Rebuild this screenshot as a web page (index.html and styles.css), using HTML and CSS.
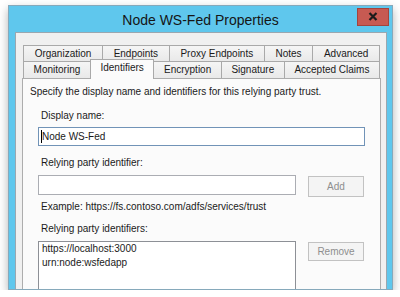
FILE: index.html
```html
<!DOCTYPE html>
<html lang="en">
<head>
<meta charset="UTF-8">
<title>Node WS-Fed Properties</title>
<link rel="stylesheet" href="styles.css">
</head>
<body>

<div class="window">
    <div class="titlebar">
        <span class="title">Node WS-Fed Properties</span>
        <div class="close">
            <svg width="10" height="9" viewBox="0 0 10 9"><path d="M1.5 1 L8.5 8 M8.5 1 L1.5 8" stroke="#1b1b1b" stroke-width="2.2" fill="none"/></svg>
        </div>
    </div>
    <div class="client">
        <div class="tabctl">
            <div class="tabrow">
                <div class="tab">Organization</div>
                <div class="tab">Endpoints</div>
                <div class="tab">Proxy Endpoints</div>
                <div class="tab">Notes</div>
                <div class="tab">Advanced</div>
            </div>
            <div class="tabrow front">
                <div class="tab">Monitoring</div>
                <div class="tab active">Identifiers</div>
                <div class="tab">Encryption</div>
                <div class="tab">Signature</div>
                <div class="tab">Accepted Claims</div>
            </div>
            <div class="page">
                <p class="intro">Specify the display name and identifiers for this relying party trust.</p>
                <div class="fields">
                    <label class="lbl">Display name:</label>
                    <div class="textbox focused wide"><span class="caret"></span>Node WS-Fed</div>

                    <label class="lbl gap">Relying party identifier:</label>
                    <div class="row">
                        <div class="textbox"></div>
                        <div class="btn tall">Add</div>
                    </div>
                    <p class="example">Example: https://fs.contoso.com/adfs/services/trust</p>

                    <label class="lbl gap2">Relying party identifiers:</label>
                    <div class="row">
                        <div class="listbox">
                            <div>https://localhost:3000</div>
                            <div>urn:node:wsfedapp</div>
                        </div>
                        <div class="btn">Remove</div>
                    </div>
                </div>
            </div>
        </div>
    </div>
</div>

</body>
</html>
```

FILE: styles.css
```css
body {
    margin: 0;
    background: #fff;
    font-family: "Liberation Sans", Arial, sans-serif;
    font-size: 10px;
    color: #1a1a1a;
}
.window {
    margin: 5px 0 0 8px;
    width: 385px;
    height: 285px;
    box-sizing: border-box;
    border: 1px solid #86a9bb;
    background: #5fc7ed;
    padding: 0 5px 0 6px;
    box-shadow: 0 4px 9px rgba(0, 0, 0, 0.3);
    display: flex;
    flex-direction: column;
}
.titlebar {
    height: 26px;
    flex: none;
    margin: 0 -5px 0 -6px;
    display: flex;
    align-items: center;
    justify-content: center;
    position: relative;
}
.title {
    font-size: 14px;
    color: #151515;
    margin-top: 2px;
}
.close {
    position: absolute;
    top: 2px;
    right: 3px;
    width: 32px;
    height: 18px;
    box-sizing: border-box;
    background: #c75a52;
    border: 1px solid #a3443d;
    display: flex;
    align-items: center;
    justify-content: center;
}
.close svg {
    margin-top: -1px;
}
.client {
    flex: 1;
    background: #f0f0f0;
    border: 1px solid #9aa7b0;
    border-bottom: none;
    padding: 12px 5px 0 6px;
    overflow: hidden;
}
.tabrow {
    display: flex;
    align-items: flex-start;
    margin: 0 1px;
}
.tab {
    flex: 1 1 auto;
    height: 16px;
    box-sizing: border-box;
    border: 1px solid #a9a9a9;
    border-bottom: none;
    background: linear-gradient(#f5f5f5, #e9e9e9);
    text-align: center;
    line-height: 15px;
    padding: 0 6px;
    white-space: nowrap;
}
.tab + .tab {
    margin-left: -1px;
}
.front .tab {
    height: 17px;
    line-height: 16px;
}
.front .tab.active {
    margin-top: -2px;
    margin-bottom: -1px;
    height: 20px;
    line-height: 16px;
    background: #fbfbfb;
    position: relative;
    z-index: 1;
}
.page {
    background: #fbfbfb;
    border: 1px solid #adadad;
    height: 240px;
    padding: 7px 0 0 7px;
}
.intro {
    margin: 0;
    line-height: 12px;
}
.fields {
    padding-left: 8px;
}
.lbl {
    display: block;
    margin: 12px 0 0 3px;
    line-height: 12px;
}
.lbl.gap {
    margin-top: 11px;
}
.lbl.gap2 {
    margin-top: 10px;
}
.textbox {
    height: 20px;
    width: 258px;
    box-sizing: border-box;
    border: 1px solid #abadb3;
    background: #fff;
    padding: 0 3px;
    line-height: 18px;
}
.textbox.wide {
    width: 327px;
    height: 19px;
    margin-top: 5px;
    padding-left: 2px;
    line-height: 17px;
}
.textbox.focused {
    border-color: #7193b7;
}
.caret {
    display: inline-block;
    width: 1px;
    height: 13px;
    background: #000;
    vertical-align: -3px;
}
.row {
    display: flex;
    align-items: flex-start;
    gap: 12px;
    margin-top: 6px;
}
.btn {
    width: 56px;
    height: 19px;
    margin-top: 1px;
    box-sizing: border-box;
    border: 1px solid #c2c2c2;
    background: #f4f4f4;
    color: #8e8e8e;
    text-align: center;
    line-height: 17px;
}
.btn.tall {
    height: 21px;
    line-height: 19px;
}
.example {
    margin: 4px 0 0 3px;
    line-height: 12px;
}
.listbox {
    width: 258px;
    height: 60px;
    box-sizing: border-box;
    border: 1px solid #8d9096;
    background: #fff;
    padding: 0 3px;
    line-height: 14px;
}
```
